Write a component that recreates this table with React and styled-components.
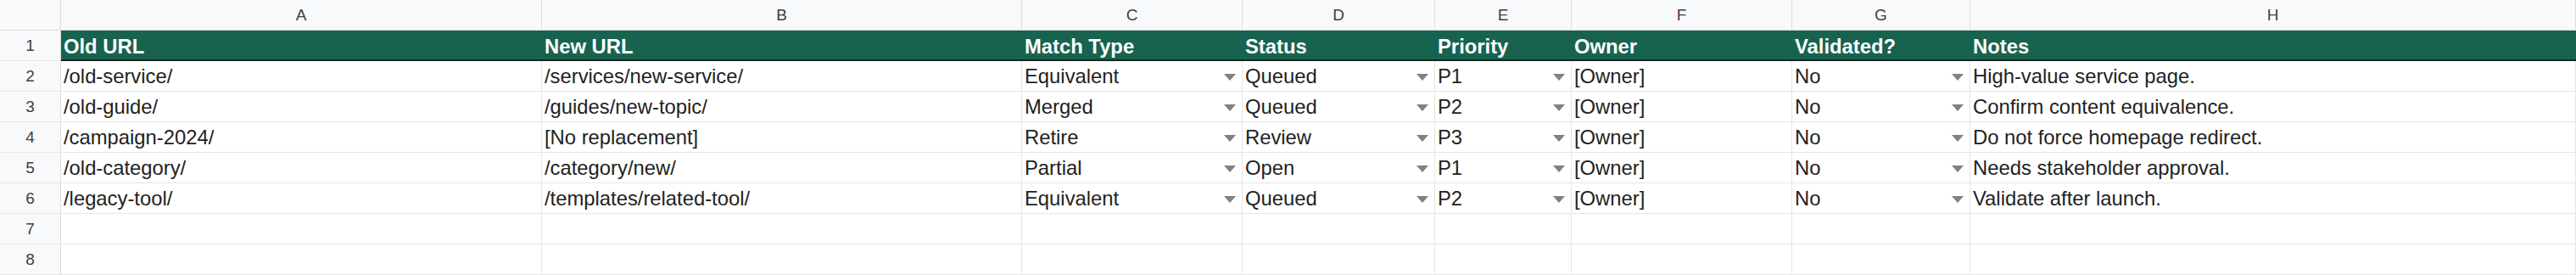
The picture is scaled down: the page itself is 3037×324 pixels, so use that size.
import React from 'react';
import styled, { createGlobalStyle } from 'styled-components';

const columns = [
    { letter: 'A', width: 567, title: 'Old URL' },
    { letter: 'B', width: 566, title: 'New URL' },
    { letter: 'C', width: 260, title: 'Match Type', dropdown: true },
    { letter: 'D', width: 227, title: 'Status', dropdown: true },
    { letter: 'E', width: 161, title: 'Priority', dropdown: true },
    { letter: 'F', width: 260, title: 'Owner' },
    { letter: 'G', width: 210, title: 'Validated?', dropdown: true },
    { letter: 'H', width: 714, title: 'Notes' },
];

const rows = [
    ['/old-service/', '/services/new-service/', 'Equivalent', 'Queued', 'P1', '[Owner]', 'No', 'High-value service page.'],
    ['/old-guide/', '/guides/new-topic/', 'Merged', 'Queued', 'P2', '[Owner]', 'No', 'Confirm content equivalence.'],
    ['/campaign-2024/', '[No replacement]', 'Retire', 'Review', 'P3', '[Owner]', 'No', 'Do not force homepage redirect.'],
    ['/old-category/', '/category/new/', 'Partial', 'Open', 'P1', '[Owner]', 'No', 'Needs stakeholder approval.'],
    ['/legacy-tool/', '/templates/related-tool/', 'Equivalent', 'Queued', 'P2', '[Owner]', 'No', 'Validate after launch.'],
];

const emptyRows = 2;

export default function App() {
    return (
        <>
            <GlobalStyle />
            <Sheet $cols={columns.map(c => `${c.width}px`).join(' ')}>
                <Corner />
                {columns.map(c => (
                    <ColHeader key={c.letter}>{c.letter}</ColHeader>
                ))}

                <RowHeader>1</RowHeader>
                {columns.map(c => (
                    <TitleCell key={c.letter}>{c.title}</TitleCell>
                ))}

                {rows.map((row, r) => (
                    <React.Fragment key={r}>
                        <RowHeader>{r + 2}</RowHeader>
                        {row.map((value, i) => (
                            <Cell key={i}>
                                <span>{value}</span>
                                {columns[i].dropdown && <Arrow />}
                            </Cell>
                        ))}
                    </React.Fragment>
                ))}

                {Array.from({ length: emptyRows }).map((_, r) => (
                    <React.Fragment key={'e' + r}>
                        <RowHeader>{rows.length + 2 + r}</RowHeader>
                        {columns.map(c => <Cell key={c.letter} />)}
                    </React.Fragment>
                ))}
            </Sheet>
        </>
    );
}

const GlobalStyle = createGlobalStyle`
    html, body {
        margin: 0;
        padding: 0;
        background: #ffffff;
        overflow: hidden;
    }
    body {
        font-family: "Liberation Sans", Arial, sans-serif;
        color: #222222;
    }
`;

const Sheet = styled.div`
    display: grid;
    grid-template-columns: 72px ${p => p.$cols};
    grid-auto-rows: 36px;
    width: 3037px;
`;

const Corner = styled.div`
    background: #f8f9fa;
    border-right: 1px solid #dcdcdc;
    border-bottom: 1px solid #dcdcdc;
    box-sizing: border-box;
`;

const ColHeader = styled.div`
    display: flex;
    align-items: center;
    justify-content: center;
    box-sizing: border-box;
    background: #f8f9fa;
    border-right: 1px solid #dcdcdc;
    border-bottom: 1px solid #dcdcdc;
    font-size: 19px;
    color: #404040;
`;

const RowHeader = styled.div`
    display: flex;
    align-items: center;
    justify-content: center;
    box-sizing: border-box;
    background: #f8f9fa;
    border-right: 1px solid #dcdcdc;
    border-bottom: 1px solid #e6e6e6;
    font-size: 19px;
    color: #404040;
`;

const TitleCell = styled.div`
    display: flex;
    align-items: flex-end;
    box-sizing: border-box;
    padding: 0 3px 1px;
    background: #17634f;
    border-bottom: 2px solid #1e2421;
    font-size: 23.8px;
    font-weight: bold;
    color: #ffffff;
    white-space: nowrap;
    overflow: hidden;
`;

const Cell = styled.div`
    display: flex;
    align-items: center;
    justify-content: space-between;
    box-sizing: border-box;
    padding: 0 7px 0 3px;
    border-right: 1px solid #e6e6e6;
    border-bottom: 1px solid #e6e6e6;
    font-size: 23.8px;
    color: #222222;
    white-space: nowrap;
    overflow: hidden;
`;

const Arrow = styled.i`
    flex: none;
    width: 0;
    height: 0;
    margin-top: 2px;
    border-left: 7px solid transparent;
    border-right: 7px solid transparent;
    border-top: 8px solid #808085;
`;
